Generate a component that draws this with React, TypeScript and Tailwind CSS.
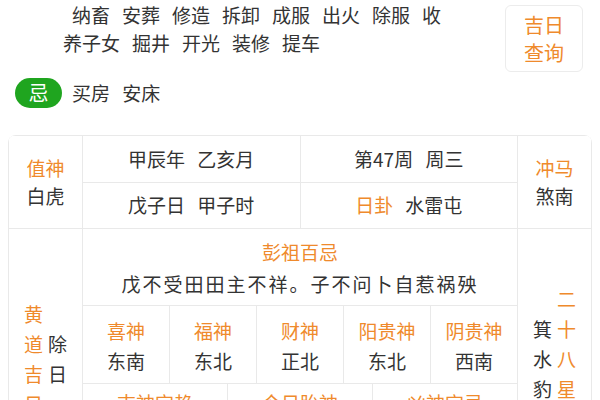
import React from "react";

const ORANGE = "text-[#ef8a2c]";

function Vertical({ text, className }: { text: string; className?: string }) {
  return (
    <div className={"flex flex-col items-center leading-[30px] " + (className ?? "")}>
      {text.split("").map((c, i) => (
        <span key={i}>{c}</span>
      ))}
    </div>
  );
}

export default function App() {
  const line1 = ["纳畜", "安葬", "修造", "拆卸", "成服", "出火", "除服", "收"];
  const line2 = ["养子女", "掘井", "开光", "装修", "提车"];
  const gods = [
    { label: "喜神", value: "东南" },
    { label: "福神", value: "东北" },
    { label: "财神", value: "正北" },
    { label: "阳贵神", value: "东北" },
    { label: "阴贵神", value: "西南" },
  ];
  const bottom = ["吉神宜趋", "今日胎神", "凶神宜忌"];

  return (
    <div
      className="w-[600px] h-[400px] overflow-hidden bg-white text-[#333] text-[19px] [word-spacing:8px]"
      style={{ fontFamily: '"Noto Sans CJK SC", "Noto Sans", sans-serif' }}
    >
      {/* 宜 continuation + 吉日查询 */}
      <div className="flex items-start">
        <div className="flex-1 pt-[1px] pl-[63px] leading-[28px]">
          <div className="flex gap-x-[12px] pl-[9px]">
            {line1.map((w) => (
              <span key={w}>{w}</span>
            ))}
          </div>
          <div className="flex gap-x-[12px]">
            {line2.map((w) => (
              <span key={w}>{w}</span>
            ))}
          </div>
        </div>
        <div
          className={
            "mt-[5px] mr-[17px] w-[78px] h-[67px] flex flex-col items-center justify-center rounded-[6px] border border-[#ececec] text-[20px] leading-[28px] " +
            ORANGE
          }
        >
          <span>吉日</span>
          <span>查询</span>
        </div>
      </div>

      {/* 忌 */}
      <div className="mt-[6px] pl-[15px] flex items-center gap-[10px]">
        <span className="w-[47px] h-[30px] rounded-full bg-[#1fa51f] text-white text-[20px] flex items-center justify-center">
          忌
        </span>
        <span>买房 安床</span>
      </div>

      {/* Table */}
      <div className="mt-[27px] mx-[8px] rounded-t-[8px] overflow-hidden bg-[#e9e9e9] px-px pt-px">
        <div className="grid grid-cols-[73px_1fr_1fr_73px] grid-rows-[46px_45px_auto] gap-px">
          <div className="row-span-2 bg-white flex flex-col items-center justify-center leading-[28px]">
            <span className={ORANGE}>值神</span>
            <span>白虎</span>
          </div>
          <div className="bg-white flex items-center justify-center">甲辰年 乙亥月</div>
          <div className="bg-white flex items-center justify-center">第47周 周三</div>
          <div className="row-span-2 bg-white flex flex-col items-center justify-center leading-[28px]">
            <span className={ORANGE}>冲马</span>
            <span>煞南</span>
          </div>
          <div className="bg-white flex items-center justify-center">戊子日 甲子时</div>
          <div className="bg-white flex items-center justify-center">
            <span className={ORANGE}>日卦</span>
            <span className="ml-[12px]">水雷屯</span>
          </div>

          {/* Row 3 */}
          <div className="bg-white flex items-center justify-center gap-[5px]">
            <Vertical text="黄道吉日" className={ORANGE} />
            <Vertical text="除日" />
          </div>
          <div className="col-span-2 grid grid-rows-[76px_77px_105px] gap-px">
            <div className="bg-white flex flex-col items-center justify-center leading-[32px] pt-[1px]">
              <span className={ORANGE}>彭祖百忌</span>
              <span className="tracking-[2px]">戊不受田田主不祥。子不问卜自惹祸殃</span>
            </div>
            <div className="grid grid-cols-5 gap-px">
              {gods.map((g) => (
                <div key={g.label} className="bg-white flex flex-col items-center pt-[10px] leading-[30px]">
                  <span className={ORANGE}>{g.label}</span>
                  <span>{g.value}</span>
                </div>
              ))}
            </div>
            <div className="grid grid-cols-3 gap-px">
              {bottom.map((b) => (
                <div key={b} className="bg-white flex flex-col items-center pt-[5px] leading-[28px]">
                  <span className={ORANGE}>{b}</span>
                </div>
              ))}
            </div>
          </div>
          <div className="bg-white flex items-center justify-center gap-[5px]">
            <Vertical text="箕水豹" />
            <Vertical text="二十八星宿" className={ORANGE} />
          </div>
        </div>
      </div>
    </div>
  );
}
